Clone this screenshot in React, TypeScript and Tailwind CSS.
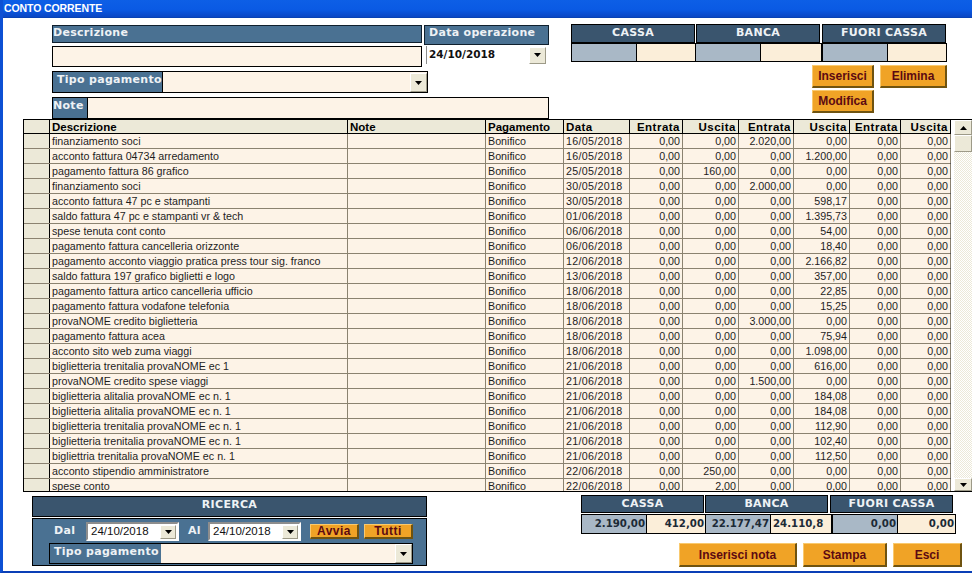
import React from 'react';

const rows: [string, string, string, string, string, string][] = [
  ['finanziamento soci', '16/05/2018', '0,00', '0,00', '2.020,00', '0,00'],
  ['acconto fattura 04734 arredamento', '16/05/2018', '0,00', '0,00', '0,00', '1.200,00'],
  ['pagamento fattura 86 grafico', '25/05/2018', '0,00', '160,00', '0,00', '0,00'],
  ['finanziamento soci', '30/05/2018', '0,00', '0,00', '2.000,00', '0,00'],
  ['acconto fattura 47 pc e stampanti', '30/05/2018', '0,00', '0,00', '0,00', '598,17'],
  ['saldo fattura 47 pc e stampanti vr & tech', '01/06/2018', '0,00', '0,00', '0,00', '1.395,73'],
  ['spese tenuta cont conto', '06/06/2018', '0,00', '0,00', '0,00', '54,00'],
  ['pagamento fattura cancelleria orizzonte', '06/06/2018', '0,00', '0,00', '0,00', '18,40'],
  ['pagamento acconto viaggio pratica press tour sig. franco', '12/06/2018', '0,00', '0,00', '0,00', '2.166,82'],
  ['saldo fattura 197 grafico biglietti e logo', '13/06/2018', '0,00', '0,00', '0,00', '357,00'],
  ['pagamento fattura artico cancelleria ufficio', '18/06/2018', '0,00', '0,00', '0,00', '22,85'],
  ['pagamento fattura vodafone telefonia', '18/06/2018', '0,00', '0,00', '0,00', '15,25'],
  ['provaNOME credito biglietteria', '18/06/2018', '0,00', '0,00', '3.000,00', '0,00'],
  ['pagamento fattura acea', '18/06/2018', '0,00', '0,00', '0,00', '75,94'],
  ['acconto sito web zuma viaggi', '18/06/2018', '0,00', '0,00', '0,00', '1.098,00'],
  ['biglietteria trenitalia provaNOME ec 1', '21/06/2018', '0,00', '0,00', '0,00', '616,00'],
  ['provaNOME credito spese viaggi', '21/06/2018', '0,00', '0,00', '1.500,00', '0,00'],
  ['biglietteria alitalia provaNOME ec n. 1', '21/06/2018', '0,00', '0,00', '0,00', '184,08'],
  ['biglietteria alitalia provaNOME ec n. 1', '21/06/2018', '0,00', '0,00', '0,00', '184,08'],
  ['biglietteria trenitalia provaNOME ec n. 1', '21/06/2018', '0,00', '0,00', '0,00', '112,90'],
  ['biglietteria trenitalia provaNOME ec n. 1', '21/06/2018', '0,00', '0,00', '0,00', '102,40'],
  ['bigliettria trenitalia provaNOME ec n. 1', '21/06/2018', '0,00', '0,00', '0,00', '112,50'],
  ['acconto stipendio amministratore', '22/06/2018', '0,00', '250,00', '0,00', '0,00'],
  ['spese conto', '22/06/2018', '0,00', '2,00', '0,00', '0,00'],
];

const gridCols = 'grid grid-cols-[26px_298px_138px_78px_66px_53px_56px_55px_56px_51px_50px]';
const labelFont = "font-['DejaVu_Sans'] font-bold text-[11px] tracking-[0.3px] whitespace-nowrap text-[#eef2f5]";

const Arrow = ({ up = false }: { up?: boolean }) => (
  <svg width="7" height="4" viewBox="0 0 7 4" className="block">
    <path d={up ? 'M3.5 0 L7 4 L0 4 Z' : 'M0 0 L7 0 L3.5 4 Z'} fill="#000" />
  </svg>
);

const XpButton = ({ className, up }: { className: string; up?: boolean }) => (
  <div className={`flex items-center justify-center bg-[#ece9d8] border-t border-l border-t-white border-l-white border-r border-b border-r-[#9d9a88] border-b-[#9d9a88] ${className}`}>
    <Arrow up={up} />
  </div>
);

const OrangeButton = ({ label, className }: { label: string; className: string }) => (
  <div className={`flex items-center justify-center bg-[#f0a326] border-t border-l border-t-[#f9c96e] border-l-[#f9c96e] border-r-2 border-b-2 border-r-[#6f5310] border-b-[#6f5310] font-['Liberation_Sans'] font-bold text-[12px] text-[#5c0a12] ${className}`}>
    {label}
  </div>
);

const DateCombo = () => (
  <div className="w-[93px] h-[19px] bg-white border-2 border-t-[#8d8d8d] border-l-[#8d8d8d] border-r-white border-b-white flex items-center pl-[3px] pr-px">
    <span className="flex-1 font-['Liberation_Sans'] text-[11.5px] text-[#111]">24/10/2018</span>
    <XpButton className="w-[16px] h-[14px]" />
  </div>
);

const TotalsHead = ({ label, className }: { label: string; className: string }) => (
  <div className={`bg-[#3a556e] border border-black flex items-center justify-center ${labelFont} ${className}`}>{label}</div>
);

const totalFont = "font-['DejaVu_Sans'] font-bold text-[10.2px] text-[#1c2a36]";

const TotalCell = ({ value, tone, className }: { value?: string; tone: 'grey' | 'cream'; className: string }) => (
  <div className={`h-full flex items-center justify-end pr-px ${totalFont} ${tone === 'grey' ? 'bg-[#a9b8c6]' : 'bg-[#fbeed9]'} ${className}`}>
    {value}
  </div>
);

export default function App() {
  return (
    <div className="w-[972px] h-[573px] overflow-hidden bg-white flex flex-col border-l-[3px] border-l-[#0d50d4] border-b-2 border-b-[#0a3fb6]">
      {/* Title bar */}
      <div className="h-[18px] shrink-0 -ml-[3px] pl-[4px] pt-px flex items-center bg-[linear-gradient(#0d5fe6,#0a5ae4_55%,#0a46c4)] border-b border-b-[#0842b4] font-['Liberation_Sans'] font-bold text-[10.5px] tracking-[-0.1px] text-white">
        CONTO CORRENTE
      </div>

      {/* Form */}
      <div className="h-[101px] shrink-0 flex pt-[6px]">
        <div className="ml-[49px] w-[497px] mt-px flex flex-col">
          <div className="flex h-[42px]">
            <div className="w-[370px] flex flex-col">
              <div className={`h-[18px] bg-[#4a7192] border border-[#10202e] pb-px flex items-center ${labelFont}`}>Descrizione</div>
              <div className="h-[21px] mt-[3px] bg-[#fdf3e7] border border-black" />
            </div>
            <div className="ml-[2px] w-[125px] flex flex-col">
              <div className={`h-[20px] bg-[#4a7192] border border-[#10202e] pl-[4px] pb-[3px] flex items-center ${labelFont}`}>Data operazione</div>
              <div className="ml-[2px] w-[121px] h-[18px] mt-px bg-white border-l border-l-[#8d8d8d] flex items-center pl-[2px] pr-px">
                <span className="flex-1 font-['DejaVu_Sans'] font-bold text-[10.5px] text-[#111]">24/10/2018</span>
                <XpButton className="w-[17px] h-[17px]" />
              </div>
            </div>
          </div>
          <div className="mt-[4px] flex w-[376px] h-[22px] border border-black bg-[#fdf3e7]">
            <div className={`w-[110px] bg-[#4a7192] pl-[4px] pb-[4px] flex items-center border-r border-r-black ${labelFont}`}>Tipo pagamento</div>
            <div className="flex-1 flex justify-end items-end">
              <XpButton className="w-[17px] h-[19px]" />
            </div>
          </div>
          <div className="mt-[4px] flex h-[22px] border border-black bg-[#fdf3e7]">
            <div className={`w-[35px] bg-[#4a7192] pb-[4px] flex items-center border-r border-r-black ${labelFont}`}>Note</div>
          </div>
        </div>

        <div className="ml-[22px] w-[376px] flex flex-col">
          <div className="flex h-[19px] gap-px">
            <TotalsHead label="CASSA" className="w-[124px]" />
            <TotalsHead label="BANCA" className="w-[124px]" />
            <TotalsHead label="FUORI CASSA" className="w-[124px] ml-px" />
          </div>
          <div className="flex h-[19px] w-[376px]">
            <div className="flex w-[125px] h-full border border-black">
              <TotalCell tone="grey" className="w-[65px] border-r border-r-black" />
              <TotalCell tone="cream" className="flex-1" />
            </div>
            <div className="flex w-[126px] h-full border border-l-0 border-black">
              <TotalCell tone="grey" className="w-[65px] border-r border-r-black" />
              <TotalCell tone="cream" className="flex-1" />
            </div>
            <div className="flex w-[125px] h-full border border-black">
              <TotalCell tone="grey" className="w-[65px] border-r border-r-black" />
              <TotalCell tone="cream" className="flex-1" />
            </div>
          </div>
          <div className="flex mt-[3px] ml-[241px] gap-[6px]">
            <OrangeButton label="Inserisci" className="w-[62px] h-[23px]" />
            <OrangeButton label="Elimina" className="w-[67px] h-[23px]" />
          </div>
          <OrangeButton label="Modifica" className="mt-[2px] ml-[241px] w-[62px] h-[23px]" />
        </div>
      </div>

      {/* Grid */}
      <div className="ml-[20px] w-[949px] h-[373px] shrink-0 flex overflow-hidden border-t border-t-black border-l border-l-black border-b border-b-black">
        <div className="w-[927px] shrink-0 border-r border-r-[#555]">
          <div className={`${gridCols} h-[14px] bg-[#ece9d8] border-b border-b-black font-['Liberation_Sans'] font-bold text-[11.5px] leading-[14px] text-black`}>
            <div className="border-r border-r-black" />
            <div className="pl-[2px] border-r border-r-black">Descrizione</div>
            <div className="pl-[2px] border-r border-r-black">Note</div>
            <div className="pl-[2px] border-r border-r-black">Pagamento</div>
            <div className="pl-[2px] border-r border-r-black tracking-[0.4px]">Data</div>
            {['Entrata', 'Uscita', 'Entrata', 'Uscita', 'Entrata', 'Uscita'].map((h, i) => (
              <div key={i} className="pr-[2px] text-right tracking-[0.5px] border-r border-r-black">{h}</div>
            ))}
          </div>
          {rows.map((r, i) => (
            <div key={i} className={`${gridCols} h-[15px] bg-[#fdf3e7] border-b border-b-[#8b8270] font-['Liberation_Sans'] text-[10.7px] leading-[14px] text-[#1d1d1d]`}>
              <div className="bg-[#ece9d8] border-r border-r-black" />
              <div className="pl-[2px] whitespace-nowrap overflow-hidden border-r border-r-[#8b8270]">{r[0]}</div>
              <div className="border-r border-r-[#8b8270]" />
              <div className="pl-[2px] border-r border-r-[#8b8270]">Bonifico</div>
              <div className="pl-[2px] tracking-[0.3px] border-r border-r-[#8b8270]">{r[1]}</div>
              <div className="pr-[2px] text-right border-r border-r-[#8b8270]">{r[2]}</div>
              <div className="pr-[2px] text-right border-r border-r-[#8b8270]">{r[3]}</div>
              <div className="pr-[2px] text-right border-r border-r-[#8b8270]">{r[4]}</div>
              <div className="pr-[2px] text-right border-r border-r-[#8b8270]">{r[5]}</div>
              <div className="pr-[2px] text-right border-r border-r-[#8b8270]">0,00</div>
              <div className="pr-[2px] text-right border-r border-r-[#8b8270]">0,00</div>
            </div>
          ))}
        </div>
        {/* Scrollbar */}
        <div className="w-[21px] shrink-0 pl-[3px] bg-white flex flex-col">
          <XpButton up className="w-[18px] h-[15px] shrink-0" />
          <div className="flex-1 flex flex-col bg-[repeating-conic-gradient(#ece9d8_0_25%,#ffffff_0_50%)] bg-[length:2px_2px]">
            <div className="h-[17px] bg-[#ece9d8] border border-t-white border-l-white border-r-[#9d9a88] border-b-[#9d9a88]" />
          </div>
          <XpButton className="w-[18px] h-[13px] shrink-0" />
        </div>
      </div>

      {/* Bottom */}
      <div className="flex flex-1">
        <div className="ml-[29px] w-[395px] mt-[4px] flex flex-col">
          <div className={`h-[21px] bg-[#3a556e] border border-black pb-[3px] flex items-center justify-center ${labelFont}`}>RICERCA</div>
          <div className="h-[48px] mt-px bg-[#4a7192] border border-black pl-[16px] pt-[3px] flex flex-col">
            <div className="flex items-center h-[19px]">
              <span className={`w-[37px] pl-[5px] pb-px ${labelFont}`}>Dal</span>
              <DateCombo />
              <span className={`w-[29px] pl-[9px] pb-px ${labelFont}`}>Al</span>
              <DateCombo />
              <OrangeButton label="Avvia" className="ml-[9px] w-[49px] h-[15px] tracking-[0.5px]" />
              <OrangeButton label="Tutti" className="ml-[5px] w-[49px] h-[15px] tracking-[0.5px]" />
            </div>
            <div className="mt-[2px] flex w-[364px] h-[21px] border border-black bg-[#fdf3e7]">
              <div className={`w-[111px] bg-[#4a7192] pl-[4px] pb-[3px] flex items-center ${labelFont}`}>Tipo pagamento</div>
              <div className="flex-1 flex justify-end items-end">
                <XpButton className="w-[17px] h-[19px]" />
              </div>
            </div>
          </div>
        </div>

        <div className="ml-[154px] w-[381px] mt-[3px] flex flex-col">
          <div className="flex h-[18px] gap-px">
            <TotalsHead label="CASSA" className="w-[123px]" />
            <TotalsHead label="BANCA" className="w-[123px]" />
            <TotalsHead label="FUORI CASSA" className="w-[123px] ml-px" />
          </div>
          <div className="flex h-[20px] w-[375px] mt-px">
            <div className="flex w-[125px] h-full border border-black">
              <TotalCell tone="grey" value="2.190,00" className="w-[65px] border-r border-r-black" />
              <TotalCell tone="cream" value="412,00" className="flex-1" />
            </div>
            <div className="flex w-[126px] h-full border border-l-0 border-black">
              <TotalCell tone="grey" value="22.177,47" className="w-[65px] border-r border-r-black" />
              <div className={`flex-1 h-full bg-[#fbeed9] pl-[2px] flex items-center overflow-hidden ${totalFont}`}>24.110,8</div>
            </div>
            <div className="flex w-[124px] h-full border border-black">
              <TotalCell tone="grey" value="0,00" className="w-[65px] border-r border-r-black" />
              <TotalCell tone="cream" value="0,00" className="flex-1" />
            </div>
          </div>
          <div className="flex mt-[9px] ml-[98px] gap-[6px]">
            <OrangeButton label="Inserisci nota" className="w-[118px] h-[24px]" />
            <OrangeButton label="Stampa" className="w-[84px] h-[24px]" />
            <OrangeButton label="Esci" className="w-[69px] h-[24px]" />
          </div>
        </div>
      </div>
    </div>
  );
}
